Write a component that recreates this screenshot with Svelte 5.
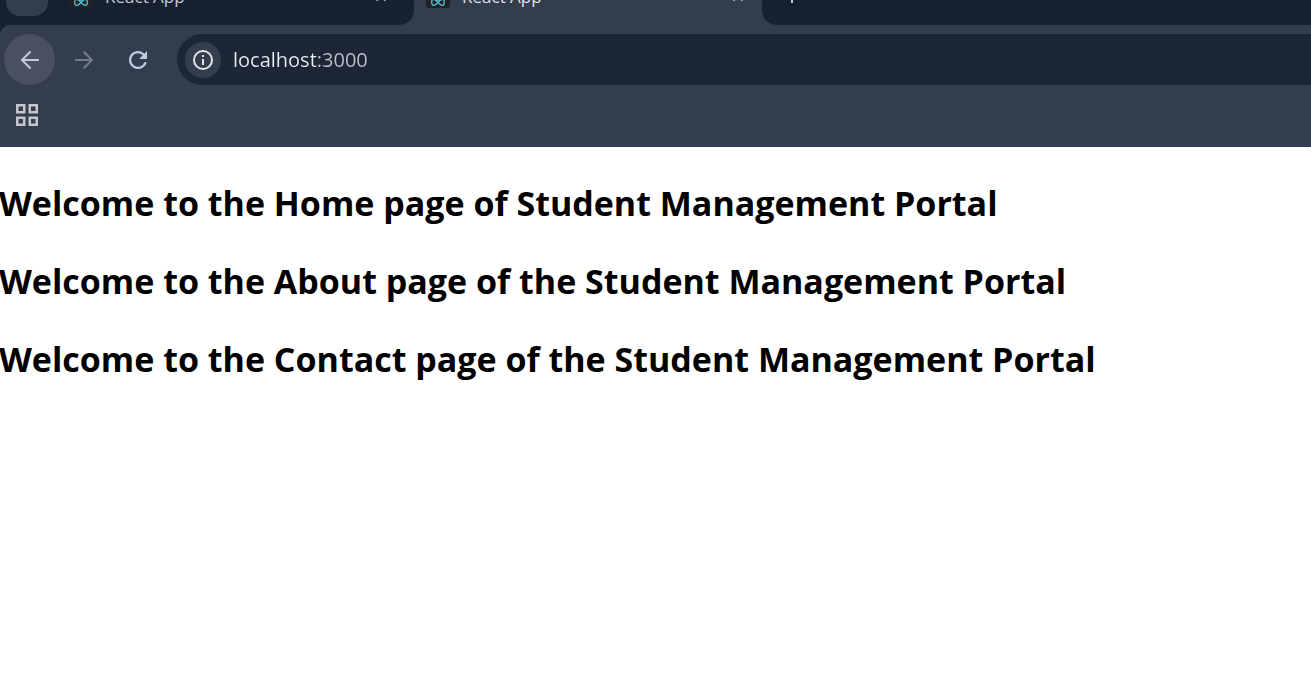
<script>
  let address = $state('localhost:3000');
  const pages = [
    'Welcome to the Home page of Student Management Portal',
    'Welcome to the About page of the Student Management Portal',
    'Welcome to the Contact page of the Student Management Portal'
  ];
</script>

{#snippet tabContent()}
  <svg class="favicon" viewBox="0 0 24 24" width="24" height="24" aria-hidden="true">
    <rect width="24" height="24" rx="3" fill="#222" />
    <g fill="none" stroke="#58c4dc" stroke-width="1.300">
      <ellipse cx="12" cy="12" rx="10.500" ry="4" />
      <ellipse cx="12" cy="12" rx="10.500" ry="4" transform="rotate(60 12 12)" />
      <ellipse cx="12" cy="12" rx="10.500" ry="4" transform="rotate(120 12 12)" />
    </g>
    <circle cx="12" cy="12" r="2" fill="#58c4dc" />
  </svg>
  <span class="title">React App</span>
  <button class="close" aria-label="Close tab">
    <svg viewBox="0 0 12 12" width="12" height="12"><path d="M1.500 1.500l9 9M10.500 1.500l-9 9" /></svg>
  </button>
{/snippet}

<header>
  <nav class="strip" aria-label="Tabs">
    <div class="side left">
      <button class="search" aria-label="Search tabs"></button>
      <div class="tab">{@render tabContent()}</div>
    </div>
    <div class="tab active">{@render tabContent()}</div>
    <div class="side right">
      <button class="new" aria-label="New tab">
        <svg viewBox="0 0 14 14" width="14" height="14"><path d="M7 0v14M0 7h14" /></svg>
      </button>
    </div>
  </nav>

  <div class="toolbar">
    <div class="controls">
      <button class="round hover" aria-label="Back">
        <svg viewBox="0 0 20 20" width="20" height="20"><path d="M19 10H2M10.500 1.500L2 10l8.500 8.500" /></svg>
      </button>
      <button class="round dim" aria-label="Forward">
        <svg viewBox="0 0 20 20" width="20" height="20"><path d="M1 10h17M9.500 1.500L18 10l-8.500 8.500" /></svg>
      </button>
      <button class="round reload" aria-label="Reload">
        <svg viewBox="4 4 16 16" width="18" height="18"><path d="M17.650 6.350A8 8 0 1 0 19.730 14h-2.080A6 6 0 1 1 16.220 7.780L13 11h7V4z" /></svg>
      </button>
      <div class="omnibox">
        <button class="info" aria-label="View site information">
          <svg viewBox="0 0 20 20" width="20" height="20">
            <circle cx="10" cy="10" r="9" />
            <path d="M10 9v6M10 5v2" />
          </svg>
        </button>
        <input aria-label="Address" bind:value={address} spellcheck="false" />
      </div>
    </div>
    <div class="bookmarks">
      <button class="apps" aria-label="Apps">
        <svg viewBox="0 0 22 22" width="22" height="22">
          <path d="M1.250 1.250h7v7h-7zM13.750 1.250h7v7h-7zM1.250 13.750h7v7h-7zM13.750 13.750h7v7h-7z" />
        </svg>
      </button>
    </div>
  </div>
</header>

<main>
  {#each pages as text}
    <h1>{text}</h1>
  {/each}
</main>

<style>
  :global(body) {
    margin: 0;
    background: #fff;
    font-family: "Segoe UI", "Open Sans", "Noto Sans", sans-serif;
    overflow-x: hidden;
  }
  header {
    background: #172030;
  }
  button {
    display: grid;
    place-items: center;
    flex: none;
    padding: 0;
    border: 0;
    background: none;
    color: #bfcbe2;
  }
  svg {
    fill: none;
    stroke: currentColor;
    stroke-width: 2;
  }
  .strip {
    display: flex;
    align-items: flex-end;
    height: 25px;
    overflow: hidden;
    background: #343d4d;
  }
  .side {
    display: flex;
    align-items: center;
    height: 58px;
    background: #172030;
  }
  .left {
    width: 414px;
    border-bottom-right-radius: 15px;
  }
  .right {
    flex: 1;
    border-bottom-left-radius: 15px;
  }
  .search {
    width: 42px;
    height: 40px;
    margin-left: 6px;
    border-radius: 14px;
    background: #343d4d;
  }
  .tab {
    display: flex;
    align-items: center;
    flex: 1;
    height: 58px;
    padding: 0 27px 0 21px;
    color: #c3cbdc;
    font-size: 17px;
    line-height: 24px;
  }
  .active {
    flex: none;
    box-sizing: border-box;
    width: 348px;
    padding: 0 18px 0 12px;
    color: #dfe2ea;
  }
  .favicon {
    margin-right: 12px;
    stroke: none;
  }
  .title {
    flex: 1;
    padding-top: 2px;
  }
  .new {
    margin-left: 23px;
  }
  .toolbar {
    border-bottom: 1px solid #3b4050;
    border-top-left-radius: 10px;
    background: #343d4d;
  }
  .controls {
    display: flex;
    align-items: center;
    gap: 3px;
    padding: 9px 0 0 4px;
  }
  .round {
    width: 51px;
    height: 51px;
    border-radius: 50%;
  }
  .hover {
    background: #4a5060;
  }
  .dim {
    color: #737a89;
  }
  .reload svg {
    fill: currentColor;
    stroke: none;
  }
  .omnibox {
    display: flex;
    align-items: center;
    flex: 1;
    gap: 12px;
    height: 51px;
    margin-left: 11px;
    padding-left: 8px;
    border-radius: 26px 0 0 26px;
    background: #1d2636;
  }
  .info {
    width: 36px;
    height: 36px;
    border-radius: 50%;
    background: #343d4d;
    color: #e3e5eb;
  }
  input {
    flex: 1;
    min-width: 0;
    padding: 0;
    border: 0;
    outline: 0;
    background: linear-gradient(90deg, #eceef2 83px, #bfc1c7 83px);
    background-clip: text;
    -webkit-text-fill-color: transparent;
    color: #eceef2;
    font: 20px/28px "Segoe UI", "Open Sans", "Noto Sans", sans-serif;
  }
  .bookmarks {
    display: flex;
    align-items: center;
    height: 59px;
    padding: 0 0 2px 16px;
  }
  .apps {
    color: #c5c6cc;
  }
  .apps svg {
    stroke-width: 2.5;
  }
  main {
    padding: 32px 0;
  }
  h1 {
    margin: 0 0 30px -1px;
    color: #000;
    font-size: 34px;
    font-weight: 700;
    line-height: 48px;
  }
</style>
